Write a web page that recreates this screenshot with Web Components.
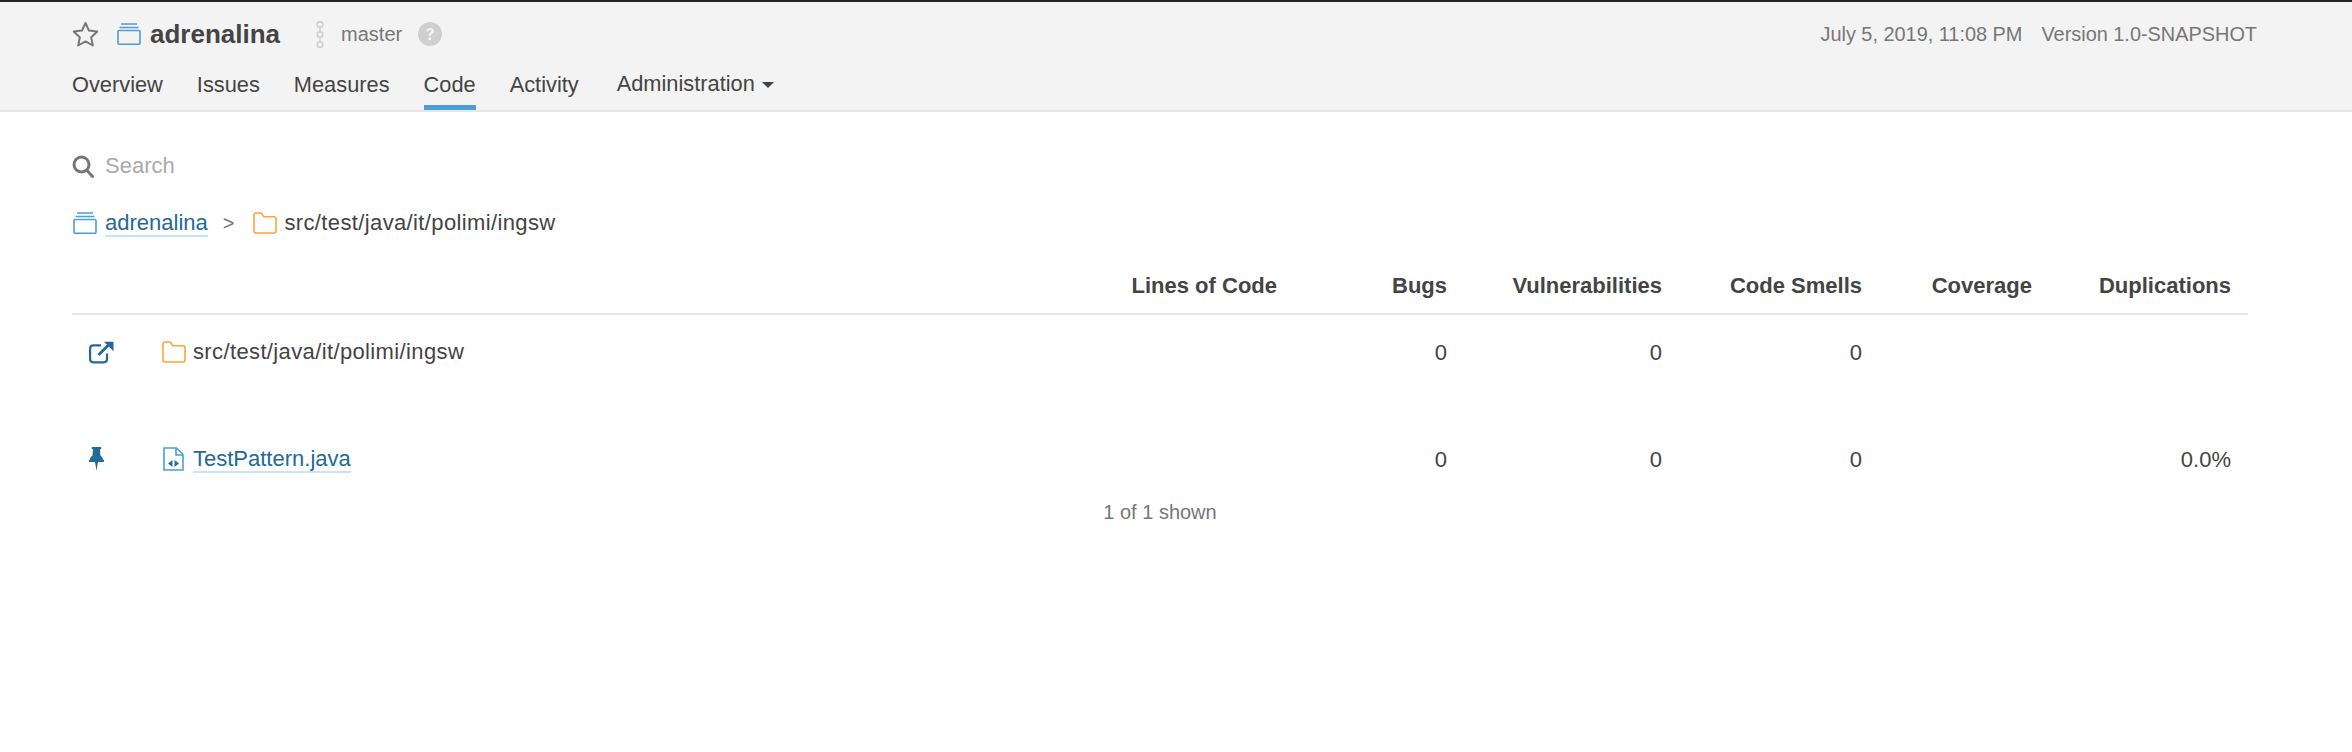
<!DOCTYPE html>
<html>
<head>
<meta charset="utf-8">
<style>
    html, body { margin: 0; background: #fff; }
    body { font-family: "Liberation Sans", Arial, sans-serif; font-size: 22px; color: #444; }
</style>
</head>
<body>
<sq-nav>
    <sq-tab>Overview</sq-tab>
    <sq-tab>Issues</sq-tab>
    <sq-tab>Measures</sq-tab>
    <sq-tab active>Code</sq-tab>
    <sq-tab>Activity</sq-tab>
    <sq-tab caret>Administration</sq-tab>
</sq-nav>
<sq-code>
    <sq-row kind="dir" name="src/test/java/it/polimi/ingsw" bugs="0" vulns="0" smells="0"></sq-row>
    <sq-row kind="file" name="TestPattern.java" bugs="0" vulns="0" smells="0" dups="0.0%"></sq-row>
</sq-code>

<script>
// icons used in more than one element
const PROJECT_ICON = `<svg width="24" height="22" viewBox="0 0 24 22" fill="none" stroke="#4b9fd5" stroke-width="1.6"><path d="M4 1h16M2.500 4.500h19"/><rect x="1" y="7.500" width="22" height="13.700" rx="1"/></svg>`;
const FOLDER_ICON = `<svg width="24" height="22" viewBox="0 0 24 22" fill="none" stroke="#ffa33b" stroke-width="1.6"><path d="M1 3.200C1 2 1.800 1 3 1h5.200l2.600 3.800H21c1.200 0 2 .8 2 2V19c0 1.200-.8 2-2 2H3c-1.200 0-2-.8-2-2z"/></svg>`;

const navTemplate = document.createElement("template");
navTemplate.innerHTML = `
    <style>
        :host {
            display: block;
            box-sizing: border-box;
            height: 112px;
            background: #f3f3f3;
            border-top: 2px solid #222;
            border-bottom: 2px solid #e6e6e6;
            padding: 0 95px 0 72px;
        }
        .top {
            display: flex;
            align-items: center;
            height: 62px;
            padding-top: 2px;
            box-sizing: border-box;
        }
        .star { margin-right: 18px; display: block; }
        .project { display: block; margin-right: 9px; height: 22px; }
        b { font-size: 26px; color: #444; margin-right: 35px; }
        .branch { display: block; margin-right: 16px; }
        .master { font-size: 20px; color: #777; margin-right: 16px; }
        .help { display: block; }
        .meta { margin-left: auto; font-size: 19.9px; color: #777; }
        .meta span { margin-left: 19px; }
        .tabs { display: flex; gap: 34px; }
    </style>
    <div class="top">
        <svg class="star" width="27" height="26" viewBox="0 0 27 26" fill="none" stroke="#777" stroke-width="2" stroke-linejoin="round"><path d="M13.500 2l3.500 7.600 8.300 1-6.100 5.700 1.600 8.200-7.300-4.100-7.300 4.100 1.600-8.200L1.700 10.600l8.300-1z"/></svg>
        <span class="project">${PROJECT_ICON}</span>
        <b>adrenalina</b>
        <svg class="branch" width="10" height="27" viewBox="0 0 10 27" fill="none" stroke="#cfcfcf" stroke-width="1.500"><circle cx="5" cy="3.500" r="2.800"/><circle cx="5" cy="13.500" r="2.800"/><circle cx="5" cy="23.500" r="2.800"/><path d="M5 6.500v4M5 16.500v4"/></svg>
        <span class="master">master</span>
        <svg class="help" width="24" height="24" viewBox="0 0 24 24"><circle cx="12" cy="12" r="12" fill="#cfcfcf"/><path d="M8.300 9.300c.3-2.100 1.800-3.300 3.900-3.300 2.200 0 3.800 1.300 3.800 3.100 0 1.500-.9 2.200-1.900 2.900-.8.500-1.200.9-1.200 1.800h-2.500c0-1.700.7-2.400 1.700-3.100.8-.6 1.300-.9 1.300-1.500 0-.7-.6-1.100-1.300-1.100-.8 0-1.300.5-1.500 1.400z" fill="#f3f3f3"/><rect x="10.400" y="15.400" width="2.600" height="2.700" fill="#f3f3f3"/></svg>
        <div class="meta">July 5, 2019, 11:08 PM<span>Version 1.0-SNAPSHOT</span></div>
    </div>
    <div class="tabs"><slot></slot></div>
`;

class SqNav extends HTMLElement {
    constructor() {
        super();
        this.attachShadow({ mode: "open" });
        this.shadowRoot.appendChild(navTemplate.content.cloneNode(true));
    }
}

const tabTemplate = document.createElement("template");
tabTemplate.innerHTML = `
    <style>
        :host {
            display: block;
            box-sizing: border-box;
            height: 46px;
            line-height: 24px;
            padding-top: 9px;
            color: #444;
            font-size: 21.8px;
        }
        :host([active]) { border-bottom: 5px solid #4b9fd5; }
        .caret {
            display: none;
            border: 6px solid transparent;
            border-top-color: #444;
            border-bottom: 0;
            margin-left: 7px;
            vertical-align: 3px;
        }
        :host([caret]) .caret { display: inline-block; }
        :host([caret]) { margin: -1px 0 0 4px; }
    </style>
    <slot></slot><span class="caret"></span>
`;

class SqTab extends HTMLElement {
    constructor() {
        super();
        this.attachShadow({ mode: "open" });
        this.shadowRoot.appendChild(tabTemplate.content.cloneNode(true));
    }
}

const codeTemplate = document.createElement("template");
codeTemplate.innerHTML = `
    <style>
        :host { display: block; padding: 0 104px 0 72px; }
        .search {
            display: flex;
            align-items: center;
            height: 24px;
            margin-top: 42px;
            color: #aaa;
        }
        .search svg { display: block; margin-right: 11px; }
        .crumbs {
            display: flex;
            align-items: center;
            height: 24px;
            margin-top: 33px;
        }
        .crumbs svg { display: block; }
        .crumbs .project { margin-left: 1px; }
        .crumbs a {
            color: #236a97;
            border-bottom: 2px solid #cae3f2;
            line-height: 24px;
            margin: 2px 0 0 8px;
        }
        .sep { color: #777; font-size: 20px; margin: 0 19px 0 15px; }
        .crumbs .dir { margin-left: 7px; letter-spacing: .37px; }
        .head {
            display: grid;
            grid-template-columns: 90px 1fr 200px 170px 215px 200px 170px 199px 17px;
            align-items: center;
            height: 50px;
            margin-top: 26px;
            border-bottom: 2px solid #e6e6e6;
            padding-bottom: 2px;
            font-weight: bold;
            text-align: right;
        }
        .count { text-align: center; color: #777; font-size: 20px; margin-top: 28px; line-height: 24px; }
    </style>
    <div class="search">
        <svg width="22" height="23" viewBox="0 0 22 23" fill="none" stroke="#777" stroke-width="3"><circle cx="9.500" cy="9.500" r="7.500"/><path d="M15 15.500l5.500 6" stroke-linecap="round"/></svg>
        Search
    </div>
    <div class="crumbs">
        <span class="project">${PROJECT_ICON}</span>
        <a>adrenalina</a>
        <span class="sep">&gt;</span>
        ${FOLDER_ICON}
        <span class="dir">src/test/java/it/polimi/ingsw</span>
    </div>
    <div class="head">
        <span></span><span></span>
        <span>Lines of Code</span>
        <span>Bugs</span>
        <span>Vulnerabilities</span>
        <span>Code Smells</span>
        <span>Coverage</span>
        <span>Duplications</span>
    </div>
    <slot></slot>
    <div class="count">1 of 1 shown</div>
`;

class SqCode extends HTMLElement {
    constructor() {
        super();
        this.attachShadow({ mode: "open" });
        this.shadowRoot.appendChild(codeTemplate.content.cloneNode(true));
    }
}

const OPEN_ICON = `<svg width="25" height="23" viewBox="0 0 25 23" fill="none" stroke="#236a97" stroke-width="2.200"><path d="M18 12.500V18c0 2-1.300 3.300-3.300 3.300H4.400C2.400 21.300 1.100 20 1.100 18V7.700c0-2 1.300-3.300 3.300-3.300H12"/><path d="M9.500 14L20 3.500" stroke-width="2.800"/><path d="M15 .8h9.500v9.500z" fill="#236a97" stroke="none"/></svg>`;
const PIN_ICON = `<svg width="15" height="24" viewBox="0 0 15 24" fill="#236a97"><path d="M2.800 0h9.400v2.200h-1.300l.6 6.600c1.500.9 2.500 2.200 2.500 3.900H.9c0-1.700 1-3 2.500-3.900l.6-6.600H2.800zM0 12.700h15V15H9l-1.500 8.800L6 15H0z"/></svg>`;
const FILE_ICON = `<svg width="21" height="24" viewBox="0 0 21 24" fill="none"><path d="M1 1h12.500L20 7.500V23H1z" stroke="#4b9fd5" stroke-width="1.600"/><path d="M13 1v7h7" stroke="#4b9fd5" stroke-width="1.600"/><path d="M9.500 13v7l-4.500-3.500zM11.500 13v7l4.500-3.500z" fill="#236a97"/></svg>`;

const rowTemplate = document.createElement("template");
rowTemplate.innerHTML = `
    <style>
        :host {
            display: grid;
            grid-template-columns: 90px 1fr 200px 170px 215px 200px 170px 199px 17px;
            grid-auto-rows: 26px;
            align-items: center;
            padding: 24px 0 57px;
            text-align: right;
        }
        :host(:last-of-type) { padding-bottom: 0; }
        :host([kind="file"]) .ico { padding-left: 1px; }
        .act { padding-left: 17px; text-align: left; }
        .act svg, .name svg { display: block; }
        .name { display: flex; align-items: center; text-align: left; }
        .name .ico { width: 31px; height: 24px; display: flex; align-items: center; box-sizing: border-box; }
        a { color: #236a97; border-bottom: 2px solid #cae3f2; line-height: 24px; }
        .num { padding-top: 2px; }
    </style>
    <span class="act"></span>
    <div class="name"><span class="ico"></span><span class="label"></span></div>
    <span></span>
    <span class="num bugs"></span>
    <span class="num vulns"></span>
    <span class="num smells"></span>
    <span></span>
    <span class="num dups"></span>
`;

class SqRow extends HTMLElement {
    constructor() {
        super();
        this.attachShadow({ mode: "open" });
        this.shadowRoot.appendChild(rowTemplate.content.cloneNode(true));
    }

    // fill the cells from the attributes
    connectedCallback() {
        const root = this.shadowRoot;
        const isFile = this.getAttribute("kind") === "file";
        root.querySelector(".act").innerHTML = isFile ? PIN_ICON : OPEN_ICON;
        root.querySelector(".ico").innerHTML = isFile ? FILE_ICON : FOLDER_ICON;
        const name = this.getAttribute("name");
        const label = root.querySelector(".label");
        if (isFile) {
            const link = document.createElement("a");
            link.textContent = name;
            label.appendChild(link);
        } else {
            label.textContent = name;
            label.style.letterSpacing = ".37px";
        }
        for (const key of ["bugs", "vulns", "smells", "dups"]) {
            root.querySelector("." + key).textContent = this.getAttribute(key) || "";
        }
    }
}

window.customElements.define("sq-nav", SqNav);
window.customElements.define("sq-tab", SqTab);
window.customElements.define("sq-code", SqCode);
window.customElements.define("sq-row", SqRow);
</script>
</body>
</html>
